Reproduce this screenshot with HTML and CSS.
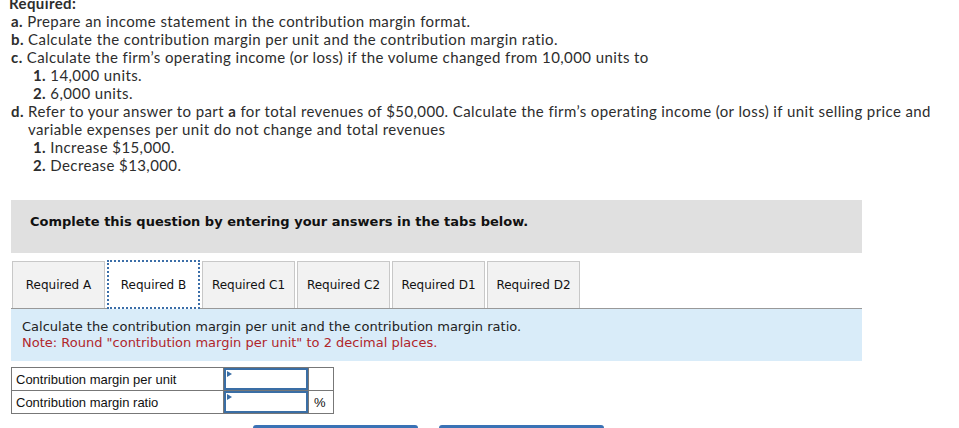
FILE: index.html
```html
<!DOCTYPE html>
<html lang="en">
<head>
    <meta charset="UTF-8">
    <meta name="viewport" content="width=device-width, initial-scale=1.0">
    <title>Contribution Margin</title>
    <link rel="stylesheet" href="styles.css">
</head>
<body>
    <main class="question">
        <div class="requirements">
            <h3 class="req-title">Required:</h3>
            <p class="req-item"><b>a.</b> Prepare an income statement in the contribution margin format.</p>
            <p class="req-item"><b>b.</b> Calculate the contribution margin per unit and the contribution margin ratio.</p>
            <p class="req-item"><b>c.</b> Calculate the firm’s operating income (or loss) if the volume changed from 10,000 units to</p>
            <p class="req-sub"><b>1.</b> 14,000 units.</p>
            <p class="req-sub"><b>2.</b> 6,000 units.</p>
            <p class="req-item"><b>d.</b> Refer to your answer to part <b>a</b> for total revenues of $50,000. Calculate the firm’s operating income (or loss) if unit selling price and variable expenses per unit do not change and total revenues</p>
            <p class="req-sub"><b>1.</b> Increase $15,000.</p>
            <p class="req-sub"><b>2.</b> Decrease $13,000.</p>
        </div>

        <div class="instructions">
            Complete this question by entering your answers in the tabs below.
        </div>

        <div class="tabs">
            <button class="tab">Required A</button>
            <button class="tab active">Required B</button>
            <button class="tab">Required C1</button>
            <button class="tab">Required C2</button>
            <button class="tab">Required D1</button>
            <button class="tab">Required D2</button>
        </div>

        <div class="tab-prompt">
            <p>Calculate the contribution margin per unit and the contribution margin ratio.</p>
            <p class="note">Note: Round "contribution margin per unit" to 2 decimal places.</p>
        </div>

        <table class="answer-table">
            <tr>
                <td class="label-cell">Contribution margin per unit</td>
                <td class="input-cell"><span class="marker"></span><input type="text"></td>
                <td class="unit-cell"></td>
            </tr>
            <tr>
                <td class="label-cell">Contribution margin ratio</td>
                <td class="input-cell"><span class="marker"></span><input type="text"></td>
                <td class="unit-cell">%</td>
            </tr>
        </table>

        <div class="nav-buttons">
            <button class="nav-button"></button>
            <button class="nav-button"></button>
        </div>
    </main>
</body>
</html>
```

FILE: styles.css
```css
* {
    margin: 0;
    padding: 0;
    box-sizing: border-box;
}

body {
    font-family: Lato, "Open Sans", sans-serif;
    color: #2d2d2d;
    background-color: white;
    overflow: hidden;
}

.question {
    padding-left: 11px;
    width: 959px;
    height: 428px;
    overflow: hidden;
}

/* requirement list */
.requirements {
    margin-top: -6px;
    width: 935px;
    font-size: 15px;
    line-height: 18px;
    letter-spacing: 0.4px;
}

.req-title {
    font-size: 15px;
    font-weight: bold;
    margin-left: -2px;
}

.req-item {
    padding-left: 17px;
    text-indent: -17px;
}

.req-sub {
    padding-left: 22px;
}

/* gray instructions bar */
.instructions {
    margin-top: 26px;
    width: 851px;
    height: 53px;
    background-color: #e0e0e0;
    padding: 14px 0 0 19px;
    font-family: "DejaVu Sans", Verdana, sans-serif;
    font-size: 13px;
    font-weight: bold;
    color: #111;
}

/* tabs */
.tabs {
    margin-top: 8px;
    width: 851px;
    padding-left: 1px;
    display: flex;
    gap: 2px;
    border-bottom: 1px solid #999;
    height: 48px;
}

.tab {
    width: 93px;
    height: 47px;
    border: 1px solid #c8c8c8;
    border-bottom: none;
    background-color: #f2f2f2;
    font-family: "DejaVu Sans", Verdana, sans-serif;
    font-size: 12px;
    color: #111;
    cursor: pointer;
}

.tab.active {
    background-color: white;
    border: 2px dotted #3b6ea8;
    height: 49px;
    margin-top: -1px;
    position: relative;
    z-index: 1;
}

/* blue prompt */
.tab-prompt {
    width: 851px;
    background-color: #d9ecf9;
    height: 52px;
    padding: 10px 0 0 11px;
    font-family: "DejaVu Sans", Verdana, sans-serif;
    font-size: 13px;
    line-height: 16px;
    color: #222;
}

.note {
    color: #b0262b;
}

/* answer table */
.answer-table {
    margin-top: 6px;
    border-collapse: collapse;
    font-family: "Liberation Sans", Arial, sans-serif;
    font-size: 13px;
    color: #111;
}

.answer-table td {
    border: 1px solid #777;
    height: 23px;
}

.label-cell {
    width: 212px;
    padding-left: 4px;
}

.input-cell {
    width: 84px;
    position: relative;
}

.input-cell input {
    display: block;
    width: 84px;
    height: 22px;
    border: 2px solid #3a6ea5;
    outline: none;
}

.marker {
    position: absolute;
    top: 3px;
    left: 3px;
    border-top: 3px solid transparent;
    border-bottom: 3px solid transparent;
    border-left: 5px solid #3a6ea5;
}

.unit-cell {
    width: 25px;
    padding-left: 5px;
}

/* bottom nav */
.nav-buttons {
    margin-top: 11px;
    margin-left: 242px;
    display: flex;
    gap: 21px;
}

.nav-button {
    width: 165px;
    height: 34px;
    border: none;
    border-radius: 3px;
    background-color: #3a72b5;
}
```
